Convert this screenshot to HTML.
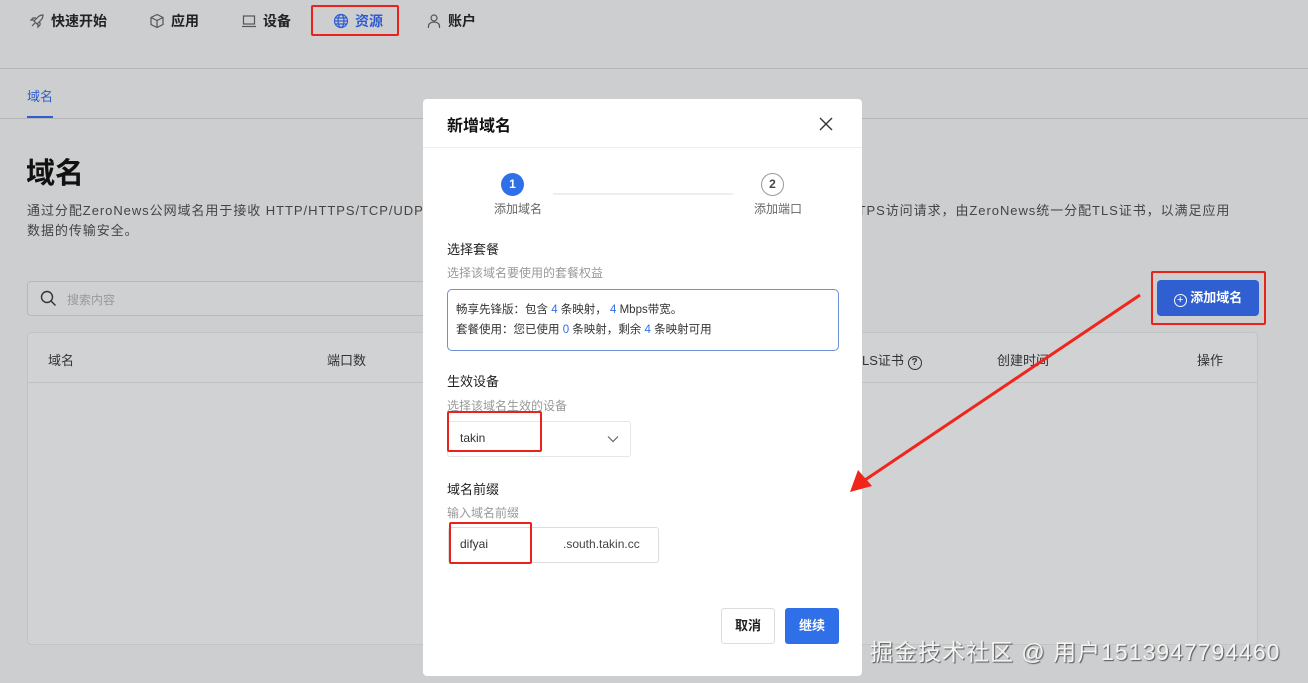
<!DOCTYPE html><html><head><meta charset="utf-8"><style>
*{box-sizing:border-box;margin:0;padding:0}
body{width:1308px;height:683px;overflow:hidden;background:#cdcecf;font-family:"Liberation Sans","Noto Sans CJK SC",sans-serif;position:relative;color:#1f1f1f}
.a{position:absolute}
.nav{font-size:14px;font-weight:bold;color:#222;top:11px}
.nav svg{vertical-align:-3px;margin-right:6px}
.red{border:2px solid #e8231c;border-radius:2px;position:absolute}
.m{position:absolute;left:423px;top:99px;width:439px;height:577px;background:#fff;border-radius:4px}
.lbl{font-size:13px;color:#222}
.sub{font-size:12px;color:#999}
</style></head><body>
<div class="a nav" style="left:29px"><svg width="16" height="16" viewBox="0 0 16 16" fill="none" stroke="#555" stroke-width="1.2"><path d="M6 10l-3 3M9 4c2-2 4-2 5-2 0 1 0 3-2 5l-4 4-3-3z M5 7H2l2-2h3M9 11v3l2-2V9"/></svg>快速开始</div>
<div class="a nav" style="left:149px"><svg width="16" height="16" viewBox="0 0 16 16" fill="none" stroke="#555" stroke-width="1.2"><path d="M8 1.5l6 3v7l-6 3-6-3v-7zM2 4.5l6 3 6-3M8 7.5v7"/></svg>应用</div>
<div class="a nav" style="left:241px"><svg width="16" height="16" viewBox="0 0 16 16" fill="none" stroke="#555" stroke-width="1.2"><rect x="2.5" y="3" width="11" height="8"/><path d="M1 13.5h14"/></svg>设备</div>
<div class="a nav" style="left:333px;color:#2f5bd3"><svg width="16" height="16" viewBox="0 0 16 16" fill="none" stroke="#2f5bd3" stroke-width="1.2"><circle cx="8" cy="8" r="6.5"/><ellipse cx="8" cy="8" rx="3" ry="6.5"/><path d="M1.5 8h13M2.5 5h11M2.5 11h11"/></svg>资源</div>
<div class="red" style="left:311px;top:5px;width:88px;height:31px"></div>
<div class="a nav" style="left:426px"><svg width="16" height="16" viewBox="0 0 16 16" fill="none" stroke="#555" stroke-width="1.2"><circle cx="8" cy="5" r="3"/><path d="M2.5 15v-2a5.5 4 0 0 1 11 0v2"/></svg>账户</div>
<div class="a" style="left:0;top:68px;width:1308px;height:1px;background:#b5b6b8"></div>
<div class="a" style="left:27px;top:86px;font-size:13px;color:#2f5bd3">域名</div>
<div class="a" style="left:27px;top:116px;width:26px;height:2px;background:#2f5bd3"></div>
<div class="a" style="left:0;top:118px;width:1308px;height:1px;background:#b5b6b8"></div>
<div class="a" style="left:26px;top:150px;font-size:29px;font-weight:bold;color:#111">域名</div>
<div class="a" style="left:27px;top:201px;font-size:13px;color:#444;line-height:20px;width:1260px;letter-spacing:0.95px;white-space:nowrap">通过分配ZeroNews公网域名用于接收 HTTP/HTTPS/TCP/UDP的访问请求，转发到内网应用中进行处理，对于HTTPS协议将接收 HTTPS访问请求，由ZeroNews统一分配TLS证书，以满足应用<br>数据的传输安全。</div>
<div class="a" style="left:27px;top:281px;width:420px;height:35px;border:1px solid #b8b9bb;border-radius:4px;background:#cfd0d1"></div>
<svg class="a" style="left:40px;top:290px" width="17" height="17" viewBox="0 0 17 17" fill="none" stroke="#333" stroke-width="1.4"><circle cx="7" cy="7" r="5.5"/><path d="M11 11l4.5 4.5"/></svg>
<div class="a" style="left:67px;top:291px;font-size:12px;color:#999">搜索内容</div>
<div class="a" style="left:27px;top:332px;width:1231px;height:313px;border:1px solid #c2c3c5;border-radius:4px;background:#d1d2d3"></div>
<div class="a" style="left:28px;top:382px;width:1229px;height:1px;background:#c0c1c3"></div>
<div class="a" style="left:48px;top:350px;font-size:13px;color:#333">域名</div>
<div class="a" style="left:327px;top:350px;font-size:13px;color:#333">端口数</div>
<div class="a" style="left:862px;top:350px;font-size:13px;color:#333">LS证书 <span style="display:inline-block;width:14px;height:14px;border:1.5px solid #333;border-radius:50%;font-size:10px;text-align:center;line-height:11px;font-weight:bold">?</span></div>
<div class="a" style="left:997px;top:350px;font-size:13px;color:#333">创建时间</div>
<div class="a" style="left:1197px;top:350px;font-size:13px;color:#333">操作</div>
<div class="a" style="left:1157px;top:280px;width:102px;height:36px;background:#2f5fd0;border-radius:4px;color:#fff;font-size:13px;font-weight:bold;line-height:36px;text-align:center"><span style="display:inline-block;width:13px;height:13px;border:1.3px solid #fff;border-radius:50%;font-size:11px;line-height:10px;font-weight:normal;vertical-align:-1px">+</span> 添加域名</div>
<div class="red" style="left:1151px;top:271px;width:115px;height:54px"></div>
<div class="m">
<div class="a" style="left:24px;top:13px;font-size:16px;font-weight:bold;color:#111">新增域名</div>
<svg class="a" style="left:396px;top:18px" width="14" height="14" viewBox="0 0 14 14" stroke="#333" stroke-width="1.4"><path d="M1 1l12 12M13 1L1 13"/></svg>
<div class="a" style="left:0;top:48px;width:439px;height:1px;background:#eee"></div>
<div class="a" style="left:78px;top:74px;width:23px;height:23px;border-radius:50%;background:#2f6fe8;color:#fff;font-size:12px;font-weight:bold;text-align:center;line-height:23px">1</div>
<div class="a" style="left:130px;top:94px;width:180px;height:2px;background:#eee"></div>
<div class="a" style="left:338px;top:74px;width:23px;height:23px;border-radius:50%;border:1px solid #999;color:#444;font-size:12px;font-weight:bold;text-align:center;line-height:21px">2</div>
<div class="a" style="left:71px;top:101px;font-size:12px;color:#666">添加域名</div>
<div class="a" style="left:331px;top:101px;font-size:12px;color:#666">添加端口</div>
<div class="a lbl" style="left:24px;top:140px">选择套餐</div>
<div class="a sub" style="left:24px;top:165px">选择该域名要使用的套餐权益</div>
<div class="a" style="left:24px;top:190px;width:392px;height:62px;border:1px solid #6e8fd8;border-radius:5px;font-size:11.5px;color:#333;padding:10px 0 0 8px;line-height:20px">畅享先锋版：包含 <b style="color:#2f6fe8;font-weight:normal">4</b> 条映射， <b style="color:#2f6fe8;font-weight:normal">4</b> Mbps带宽。<br>套餐使用：您已使用 <b style="color:#2f6fe8;font-weight:normal">0</b> 条映射，剩余 <b style="color:#2f6fe8;font-weight:normal">4</b> 条映射可用</div>
<div class="a lbl" style="left:24px;top:272px">生效设备</div>
<div class="a sub" style="left:24px;top:298px">选择该域名生效的设备</div>
<div class="a" style="left:24px;top:322px;width:184px;height:36px;border:1px solid #e6e6e6;border-radius:3px"></div>
<div class="a" style="left:37px;top:332px;font-size:12px;color:#333">takin</div>
<svg class="a" style="left:184px;top:336px" width="12" height="8" viewBox="0 0 12 8" fill="none" stroke="#666" stroke-width="1.2"><path d="M1 1.5l5 5 5-5"/></svg>
<div class="red" style="left:24px;top:312px;width:95px;height:41px"></div>
<div class="a lbl" style="left:24px;top:380px">域名前缀</div>
<div class="a sub" style="left:24px;top:405px">输入域名前缀</div>
<div class="a" style="left:25px;top:428px;width:211px;height:36px;border:1px solid #ddd;border-radius:3px"></div>
<div class="a" style="left:108px;top:429px;width:1px;height:34px;background:#ddd"></div>
<div class="a" style="left:37px;top:438px;font-size:12px;color:#333">difyai</div>
<div class="a" style="left:140px;top:438px;font-size:12px;color:#444">.south.takin.cc</div>
<div class="red" style="left:26px;top:423px;width:83px;height:42px"></div>
<div class="a" style="left:298px;top:509px;width:54px;height:36px;border:1px solid #ddd;border-radius:3px;font-size:13px;font-weight:bold;text-align:center;line-height:34px">取消</div>
<div class="a" style="left:362px;top:509px;width:54px;height:36px;background:#2f6fe8;border-radius:3px;color:#fff;font-size:13px;font-weight:bold;text-align:center;line-height:36px">继续</div>
</div>
<svg class="a" style="left:0;top:0" width="1308" height="683"><path d="M1140 295L862 482" stroke="#f0261c" stroke-width="3"/><path d="M850 492l8-22 14 16z" fill="#f0261c"/></svg>
<div class="a" style="left:870px;top:633px;font-size:23px;letter-spacing:1px;color:#f4f4f4;text-shadow:1px 1px 1px #555;white-space:nowrap">掘金技术社区 @ 用户1513947794460</div>
</body></html>
